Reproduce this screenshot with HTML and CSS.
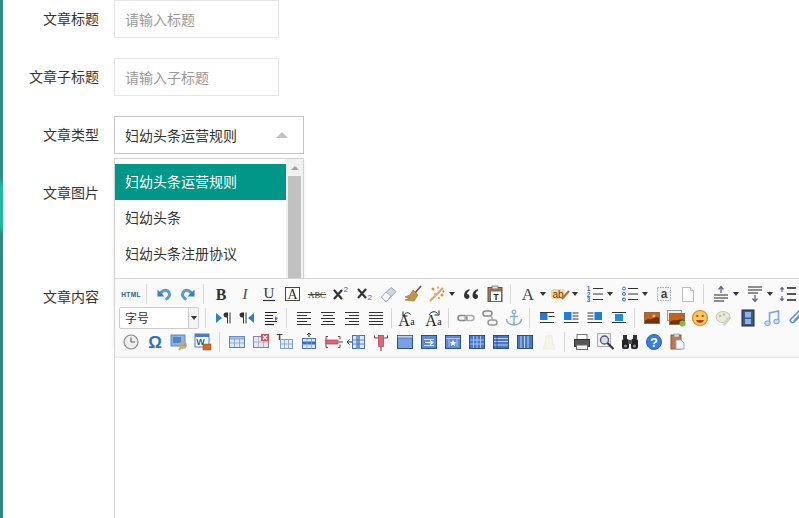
FILE: index.html
```html
<!DOCTYPE html>
<html lang="zh">
<head>
<meta charset="utf-8">
<title>文章编辑</title>
<link rel="stylesheet" href="styles.css">
</head>
<body>
<svg class="sprite" xmlns="http://www.w3.org/2000/svg">
<defs>
<symbol id="undo" viewBox="0 0 20 20"><path d="M6.500 10.500C7 6 13 5 15 8.500c1.500 3-.5 5.500-3.500 7" fill="none" stroke="#5b9bd5" stroke-width="3"/><path d="M3.500 5.500l7 7H3.500z" fill="#3a7cc0"/></symbol>
<symbol id="redo" viewBox="0 0 20 20"><g transform="matrix(-1 0 0 1 20 0)"><path d="M6.500 10.500C7 6 13 5 15 8.500c1.500 3-.5 5.500-3.500 7" fill="none" stroke="#5b9bd5" stroke-width="3"/><path d="M3.500 5.500l7 7H3.500z" fill="#3a7cc0"/></g></symbol>
<symbol id="bold" viewBox="0 0 20 20"><text x="10" y="15.500" class="t-b">B</text></symbol>
<symbol id="italic" viewBox="0 0 20 20"><text x="10" y="15" class="t-i">I</text></symbol>
<symbol id="under" viewBox="0 0 20 20"><text x="10" y="14" class="t-u">U</text><path d="M4 16.500h12" stroke="#333" stroke-width="1.200"/></symbol>
<symbol id="abox" viewBox="0 0 20 20"><rect x="2.500" y="3.500" width="14" height="13" fill="#fff" stroke="#444"/><text x="9.500" y="15" class="t-a">A</text></symbol>
<symbol id="abc" viewBox="0 0 20 20"><text x="10" y="13.500" class="t-abc">ABC</text><path d="M1 10.500h18" stroke="#444"/></symbol>
<symbol id="sup" viewBox="0 0 20 20"><path d="M3 6l8 9M11 6l-8 9" stroke="#333" stroke-width="2.200"/><text x="12.500" y="8" class="t-s">2</text></symbol>
<symbol id="sub" viewBox="0 0 20 20"><path d="M3 5l8 9M11 5l-8 9" stroke="#333" stroke-width="2.200"/><text x="12.500" y="16" class="t-s">2</text></symbol>
<symbol id="eraser" viewBox="0 0 20 20"><path d="M2.500 13L12 3.500l5 4L8 17H6z" fill="#c9d8ec" stroke="#8fa5c2"/><path d="M2.500 13l4.500-5 5 4-4 5H6z" fill="#f6f7fa" stroke="#a4b2c6"/></symbol>
<symbol id="brush" viewBox="0 0 20 20"><path d="M18 2l-6 7" stroke="#7a5a30" stroke-width="1.800"/><path d="M10 6l5 5-4 6-9-1 5-2-5-1 5-2z" fill="#c4944f" stroke="#8a6630" stroke-width=".6"/></symbol>
<symbol id="wand" viewBox="0 0 20 20"><path d="M3 17L16 4" stroke="#e2a264" stroke-width="2.200"/><circle cx="6" cy="5" r="1.500" fill="#d9903f"/><circle cx="15" cy="11" r="1.500" fill="#d9903f"/><circle cx="11" cy="3.500" r="1.200" fill="#e4b27a"/><circle cx="16.500" cy="7.500" r="1" fill="#b67a40"/><circle cx="8" cy="10" r="1.200" fill="#e8b884"/><circle cx="12" cy="14" r="1.100" fill="#d9903f"/></symbol>
<symbol id="quote" viewBox="0 0 20 20"><path d="M8.500 5C5 6 3 8 3 11.500 3 13.500 4.500 15 6 15s2.500-1 2.500-2.500S7.500 10 6 10c.2-1.500 1.200-2.800 2.500-3.500zM17 5c-3.500 1-5.500 3-5.500 6.500 0 2 1.500 3.500 3 3.500s2.500-1 2.500-2.500-1-2.500-2.500-2.500c.2-1.500 1.200-2.800 2.500-3.500z" fill="#333"/></symbol>
<symbol id="paste" viewBox="0 0 20 20"><rect x="3" y="3.500" width="14" height="14" fill="#a87a55" stroke="#6e4a30"/><rect x="7" y="2" width="6" height="3" fill="#ddd" stroke="#666" stroke-width=".7"/><rect x="5.500" y="7" width="11" height="10.500" fill="#fff" stroke="#555" stroke-width=".8"/><text x="11" y="16" class="t-t">T</text></symbol>
<symbol id="forecolor" viewBox="0 0 20 20"><text x="10" y="15.500" class="t-f">A</text></symbol>
<symbol id="hilite" viewBox="0 0 20 20"><rect x="1" y="5" width="14" height="10" fill="#fbd7a0" rx="2"/><text x="8" y="13.500" class="t-ab">ab</text><path d="M12 15l7-8" stroke="#a87a40" stroke-width="2.200"/></symbol>
<symbol id="ol" viewBox="0 0 20 20"><text x="3.500" y="7" class="t-n">1</text><text x="3.500" y="12.500" class="t-n">2</text><text x="3.500" y="18" class="t-n">3</text><path d="M8 4.500h10M8 10h10M8 15.500h10" stroke="#333" stroke-width="1.200"/></symbol>
<symbol id="ul" viewBox="0 0 20 20"><circle cx="4" cy="4.500" r="1.500" fill="none" stroke="#3a6cb8"/><circle cx="4" cy="10" r="1.500" fill="none" stroke="#3a6cb8"/><circle cx="4" cy="15.500" r="1.500" fill="none" stroke="#3a6cb8"/><path d="M8 4.500h10M8 10h10M8 15.500h10" stroke="#333" stroke-width="1.200"/></symbol>
<symbol id="dotbox" viewBox="0 0 20 20"><rect x="3.500" y="3.500" width="13" height="13" fill="#eef2f8" stroke="#9ab" stroke-dasharray="1.500 1"/><text x="10" y="14" class="t-dot">a</text></symbol>
<symbol id="page" viewBox="0 0 20 20"><path d="M4.500 3.500h8l3 3v11h-11z" fill="#fcfcfc" stroke="#bbb"/><path d="M12.500 3.500v3h3" fill="#eee" stroke="#bbb"/></symbol>
<symbol id="pbefore" viewBox="0 0 20 20"><path d="M10 9V3M7.500 5.500L10 2.500l2.500 3" fill="none" stroke="#6a5aa8" stroke-width="1.300"/><path d="M3 11h14M3 14h14M3 17h10" stroke="#222" stroke-width="1.200"/></symbol>
<symbol id="pafter" viewBox="0 0 20 20"><path d="M3 3h14M3 6h14M3 9h10" stroke="#222" stroke-width="1.200"/><path d="M10 11v6M7.500 14.500l2.500 3 2.500-3" fill="none" stroke="#6a5aa8" stroke-width="1.300"/></symbol>
<symbol id="lineh" viewBox="0 0 20 20"><path d="M5 2.500l-2.500 3h5zM5 17.500l-2.500-3h5z" fill="#6a5aa8"/><path d="M5 5v3M5 12v3" stroke="#6a5aa8" stroke-width="1.200"/><path d="M10 4h9M10 10h9M10 16h9" stroke="#222" stroke-width="1.300"/></symbol>
<symbol id="ltr" viewBox="0 0 20 20"><path d="M3 5l6 5-6 5z" fill="#2f7fc8"/><path d="M14.500 4.500v11M17 4.500v11" stroke="#333"/><path d="M14.500 4.500h-1.500a2.500 2.500 0 0 0 0 5h1.500z" fill="#333"/></symbol>
<symbol id="rtl" viewBox="0 0 20 20"><path d="M17 5l-6 5 6 5z" fill="#2f7fc8"/><path d="M6.500 4.500v11M9 4.500v11" stroke="#333"/><path d="M6.500 4.500H5a2.500 2.500 0 0 0 0 5h1.500z" fill="#333"/></symbol>
<symbol id="indent" viewBox="0 0 20 20"><path d="M4 4.500h12M4 7.500h8M4 10.500h8M4 13.500h12" stroke="#222" stroke-width="1.200"/><path d="M14 8l3 2.500-3 2.500z" fill="#2f7fc8"/><path d="M4 16.500h9" stroke="#222" stroke-width="1.200"/></symbol>
<symbol id="left" viewBox="0 0 20 20"><path d="M3 4.500h14M3 7.500h10M3 10.500h14M3 13.500h10M3 16.500h14" stroke="#333" stroke-width="1.100"/></symbol>
<symbol id="center" viewBox="0 0 20 20"><path d="M3 4.500h14M5 7.500h10M3 10.500h14M5 13.500h10M3 16.500h14" stroke="#333" stroke-width="1.100"/></symbol>
<symbol id="right" viewBox="0 0 20 20"><path d="M3 4.500h14M7 7.500h10M3 10.500h14M7 13.500h10M3 16.500h14" stroke="#333" stroke-width="1.100"/></symbol>
<symbol id="just" viewBox="0 0 20 20"><path d="M3 4.500h14M3 7.500h14M3 10.500h14M3 13.500h14M3 16.500h14" stroke="#333" stroke-width="1.100"/></symbol>
<symbol id="aa1" viewBox="0 0 20 20"><text x="7" y="18" class="t-aa">A</text><text x="15.500" y="17" class="t-aa2">a</text><path d="M6.500 8c1-3.500 5-4.500 7-1.500" fill="none" stroke="#222"/><path d="M6 3.500V8h4.500" fill="none" stroke="#222"/></symbol>
<symbol id="aa2" viewBox="0 0 20 20"><text x="7" y="18" class="t-aa">A</text><text x="15.500" y="17" class="t-aa2">a</text><path d="M5 7c2-3.500 6-4.500 8.500-1.500" fill="none" stroke="#222"/><path d="M15 2.500V7h-4.500" fill="none" stroke="#222"/></symbol>
<symbol id="link" viewBox="0 0 20 20"><rect x="2" y="7.500" width="9" height="5" rx="2.500" fill="none" stroke="#888" stroke-width="1.500"/><rect x="9" y="7.500" width="9" height="5" rx="2.500" fill="none" stroke="#aaa" stroke-width="1.500"/></symbol>
<symbol id="unlink" viewBox="0 0 20 20"><rect x="3" y="3" width="9" height="5" rx="2.500" fill="none" stroke="#888" stroke-width="1.500"/><rect x="8" y="12" width="9" height="5" rx="2.500" fill="none" stroke="#999" stroke-width="1.500"/><path d="M11 7l2 6" stroke="#aaa" stroke-width="1.500"/></symbol>
<symbol id="anchor" viewBox="0 0 20 20"><circle cx="10" cy="4" r="1.800" fill="none" stroke="#7fb0d4" stroke-width="1.300"/><path d="M10 6v11M6 8.500h8M2.500 11c0 4 4 6 7.500 6s7.500-2 7.500-6" fill="none" stroke="#7fb0d4" stroke-width="1.500"/></symbol>
<symbol id="imgl" viewBox="0 0 20 20"><rect x="3" y="5" width="7.500" height="7" fill="#1d7fd6"/><path d="M3 4.500h14M11.500 8.500h6M3 14.500h14" stroke="#333" stroke-width="1"/></symbol>
<symbol id="imgn" viewBox="0 0 20 20"><rect x="3" y="4" width="7.500" height="8" fill="#1d7fd6"/><path d="M11.500 5h6M11.500 8h6M11.500 11h6M3 14.500h14.500" stroke="#333" stroke-width="1"/></symbol>
<symbol id="imgr" viewBox="0 0 20 20"><rect x="9.500" y="4" width="7.500" height="8" fill="#1d7fd6"/><path d="M2.500 5h6M2.500 8h6M2.500 11h6M2.500 14.500h14.500" stroke="#333" stroke-width="1"/></symbol>
<symbol id="imgc" viewBox="0 0 20 20"><path d="M3 4.500h14M3 14.500h14" stroke="#333" stroke-width="1.100"/><rect x="6" y="6" width="8" height="7" fill="#1d8fd6"/></symbol>
<symbol id="image" viewBox="0 0 20 20"><rect x="2.500" y="4.500" width="15" height="11" fill="#c5641a" stroke="#8a6a50"/><path d="M3 13c3-3 6-1 8-3s4-1 6 0v5H3z" fill="#6d3410"/><circle cx="12" cy="8" r="1.500" fill="#f6c050"/></symbol>
<symbol id="multi" viewBox="0 0 20 20"><rect x="1.500" y="2.500" width="14" height="10" fill="#eee" stroke="#999"/><rect x="3.500" y="5.500" width="15" height="11" fill="#c5641a" stroke="#8a6a50"/><path d="M4 14c3-3 6-1 8-2s4-1 6 0v4H4z" fill="#6d3410"/><circle cx="16.500" cy="15.500" r="3" fill="#8cb82a"/></symbol>
<symbol id="emoji" viewBox="0 0 20 20"><circle cx="10" cy="10" r="7.500" fill="#f6c760" stroke="#d88a2a" stroke-width="1.200"/><circle cx="7.300" cy="8" r="1.100" fill="#8a4a10"/><circle cx="12.700" cy="8" r="1.100" fill="#8a4a10"/><path d="M6 12h8c-.5 2-2 3-4 3s-3.500-1-4-3z" fill="#a84a20"/></symbol>
<symbol id="scrawl" viewBox="0 0 20 20"><ellipse cx="9" cy="9" rx="7" ry="5.500" fill="#e8e8dc" stroke="#c4c4b4"/><path d="M14 8l3 2-6 8-2-1z" fill="#d4d4bc"/><circle cx="6" cy="8" r="1.200" fill="#b4c0a0"/><circle cx="10" cy="6.500" r="1.200" fill="#c8b890"/></symbol>
<symbol id="video" viewBox="0 0 20 20"><rect x="4" y="2" width="12" height="16" fill="#3d5a84" stroke="#223"/><rect x="7" y="4" width="6" height="5.500" fill="#8fb2e0"/><rect x="7" y="11" width="6" height="5" fill="#8fb2e0"/></symbol>
<symbol id="music" viewBox="0 0 20 20"><path d="M7.500 15V5l9-2v10" fill="none" stroke="#7da4d8" stroke-width="1.600"/><ellipse cx="5.500" cy="15.200" rx="2.800" ry="2.300" fill="#c5d8f0" stroke="#7da4d8"/><ellipse cx="14.500" cy="13.500" rx="2.800" ry="2.300" fill="#c5d8f0" stroke="#7da4d8"/></symbol>
<symbol id="attach" viewBox="0 0 20 20"><path d="M15 7l-7 7c-2 2-5-1-3-3l8-8c1.500-1.500 4 .5 2.500 2l-7.500 8" fill="none" stroke="#5c8fd0" stroke-width="1.600"/></symbol>
<symbol id="clock" viewBox="0 0 20 20"><circle cx="10" cy="10" r="7" fill="#eee" stroke="#888" stroke-width="1.200"/><path d="M10 5.500V10h4" fill="none" stroke="#555"/></symbol>
<symbol id="omega" viewBox="0 0 20 20"><text x="10" y="16" class="t-om">Ω</text></symbol>
<symbol id="wordimg" viewBox="0 0 20 20"><rect x="2" y="3" width="14" height="11" fill="#8ab4e4" stroke="#5a86bc"/><rect x="4" y="5" width="8" height="6" fill="#4a86cc"/><circle cx="14" cy="13" r="3" fill="none" stroke="#d8a050" stroke-width="1.600"/><path d="M12 15l-2 3" stroke="#d8a050" stroke-width="1.800"/></symbol>
<symbol id="word" viewBox="0 0 20 20"><rect x="2" y="2" width="14" height="13" fill="#fff" stroke="#4a7cc0"/><rect x="2" y="2" width="14" height="3" fill="#4a7cc0"/><text x="7.500" y="13" class="t-w">W</text><rect x="10" y="12" width="8" height="6" fill="#d46a20" stroke="#8a4a20" stroke-width=".5"/></symbol>
<symbol id="tbl" viewBox="0 0 20 20"><rect x="2.500" y="4.500" width="15" height="11" fill="#dfe8f6" stroke="#5c7fb8"/><rect x="2.500" y="4.500" width="15" height="2.500" fill="#a9c1e6" stroke="#5c7fb8" stroke-width=".6"/><path d="M7.500 7v8M12.500 7v8M3 11h14" stroke="#7f9fcf" stroke-width=".8"/></symbol>
<symbol id="tbldel" viewBox="0 0 20 20"><rect x="2.500" y="4.500" width="15" height="11" fill="#e4e8f2" stroke="#8a7fa8"/><path d="M7.500 5v10M12.500 5v10M3 10h14" stroke="#a0a8c8" stroke-width=".8"/><rect x="10" y="2" width="8" height="7" fill="#e04a50"/><path d="M12 3.500l4 4M16 3.500l-4 4" stroke="#fff" stroke-width="1.300"/></symbol>
<symbol id="tbltitle" viewBox="0 0 20 20"><text x="4.500" y="8" class="t-tt">T</text><rect x="5.500" y="7.500" width="12" height="9" fill="#e8eef8" stroke="#7f9fcf"/><path d="M9.500 8v8M13.500 8v8M6 12h11" stroke="#7f9fcf" stroke-width=".8"/></symbol>
<symbol id="rowins" viewBox="0 0 20 20"><path d="M10 1v4M8 3l2-2 2 2" fill="none" stroke="#333"/><rect x="3.500" y="6.500" width="13" height="10" fill="#dfe8f6" stroke="#4a70b0"/><rect x="3.500" y="9.500" width="13" height="3" fill="#2f6fd0"/><path d="M8 7v10M12.500 7v10" stroke="#7f9fcf" stroke-width=".8"/></symbol>
<symbol id="rowdel" viewBox="0 0 20 20"><path d="M5 4.500H3v11h2M15 4.500h2v3M15 15.500h2v-3" fill="none" stroke="#8a3a3a"/><rect x="3" y="8" width="12" height="4" fill="#d86a78" stroke="#a84050" stroke-width=".7"/><path d="M15.500 10H20" stroke="#444"/></symbol>
<symbol id="colins" viewBox="0 0 20 20"><path d="M0 10h5M2.500 7.500L0 10l2.500 2.500" fill="none" stroke="#333"/><rect x="5.500" y="3.500" width="12" height="13" fill="#dfe8f6" stroke="#4a70b0"/><rect x="9" y="3.500" width="4" height="13" fill="#6f9be0"/><path d="M6 8h11M6 12h11" stroke="#4a70b0" stroke-width=".8"/></symbol>
<symbol id="coldel" viewBox="0 0 20 20"><path d="M3.500 6V3.500M16.500 6V3.500M3.500 6h13" fill="none" stroke="#8a3a3a"/><rect x="7.500" y="3.500" width="5" height="11" fill="#d86a78" stroke="#a84050" stroke-width=".7"/><path d="M10 15v4" stroke="#444"/></symbol>
<symbol id="merge" viewBox="0 0 20 20"><rect x="2.500" y="3.500" width="15" height="13" fill="#7b9fe0" stroke="#284f90"/><rect x="2.500" y="3.500" width="15" height="2.500" fill="#c0d0ec" stroke="#284f90" stroke-width=".5"/></symbol>
<symbol id="mergeR" viewBox="0 0 20 20"><rect x="2.500" y="3.500" width="15" height="13" fill="#5f8ad4" stroke="#284f90"/><path d="M5 7.500h10M5 13.500h10" stroke="#fff" stroke-width=".8"/><path d="M6 10.500h7M11 8.500l3 2-3 2" fill="none" stroke="#fff" stroke-width="1.100"/></symbol>
<symbol id="mergeD" viewBox="0 0 20 20"><rect x="2.500" y="3.500" width="15" height="13" fill="#5f8ad4" stroke="#284f90"/><path d="M6 6.500v8M14 6.500v8M3 6.500h14" stroke="#c0d0ec" stroke-width=".8"/><path d="M10 7.500l1 2.500 2.500.2-2 1.500.8 2.500-2.300-1.400-2.300 1.400.8-2.500-2-1.500 2.500-.2z" fill="#fff"/></symbol>
<symbol id="split" viewBox="0 0 20 20"><rect x="2.500" y="3.500" width="15" height="13" fill="#4a78d0" stroke="#284f90"/><path d="M6.500 4v12M10 4v12M13.500 4v12M3 8h14M3 12h14" stroke="#c0d0ec" stroke-width=".8"/></symbol>
<symbol id="splitR" viewBox="0 0 20 20"><rect x="2.500" y="3.500" width="15" height="13" fill="#4a78c0" stroke="#284f90"/><path d="M3 6.500h14M3 9.500h14M3 13h14" stroke="#cfdcf0" stroke-width=".9"/><path d="M6 4v12" stroke="#284f90" stroke-width=".8"/></symbol>
<symbol id="splitC" viewBox="0 0 20 20"><rect x="2.500" y="3.500" width="15" height="13" fill="#4a78c0" stroke="#284f90"/><path d="M6 4v12M9.500 4v12M13 4v12" stroke="#cfdcf0" stroke-width=".9"/></symbol>
<symbol id="ghost" viewBox="0 0 20 20"><path d="M7 4h6l1 8 2 5H4l2-5z" fill="#f4f4ea" stroke="#eeeee2"/></symbol>
<symbol id="print" viewBox="0 0 20 20"><rect x="5" y="2.500" width="10" height="6" fill="#fff" stroke="#777"/><rect x="2.500" y="7.500" width="15" height="7" fill="#555" stroke="#333"/><rect x="4.500" y="13" width="11" height="4.500" fill="#f4f4f4" stroke="#666"/></symbol>
<symbol id="preview" viewBox="0 0 20 20"><rect x="1.500" y="1.500" width="13" height="13" fill="#f0f0f0" stroke="#aaa"/><circle cx="8.500" cy="8" r="4" fill="#cde0ee" stroke="#556" stroke-width="1.300"/><path d="M11.500 11l6 6" stroke="#334" stroke-width="2.200"/></symbol>
<symbol id="search" viewBox="0 0 20 20"><rect x="3" y="3" width="4" height="4" fill="#333"/><rect x="13" y="3" width="4" height="4" fill="#333"/><rect x="2" y="7" width="7" height="10" rx="2" fill="#222"/><rect x="11" y="7" width="7" height="10" rx="2" fill="#222"/><rect x="8" y="8" width="4" height="4" fill="#555"/><circle cx="5.500" cy="14" r="1.600" fill="#889"/><circle cx="14.500" cy="14" r="1.600" fill="#889"/></symbol>
<symbol id="help" viewBox="0 0 20 20"><circle cx="10" cy="10" r="7.500" fill="#3a7fdc" stroke="#2a60b0"/><text x="10" y="14.500" class="t-q">?</text></symbol>
<symbol id="tpl" viewBox="0 0 20 20"><rect x="3" y="3" width="10" height="14" fill="#b87a50" stroke="#8a5a38"/><rect x="6" y="2" width="5" height="3" fill="#ddd" stroke="#888" stroke-width=".6"/><path d="M8 8h5l3 3v6H8z" fill="#f4f6fa" stroke="#9ab"/></symbol>
</defs>
</svg>

<div class="page">
  <div class="strip"></div>
  <form class="form">
    <div class="row">
      <label class="label">文章标题</label>
      <input class="input" type="text" placeholder="请输入标题">
    </div>
    <div class="row">
      <label class="label">文章子标题</label>
      <input class="input" type="text" placeholder="请输入子标题">
    </div>
    <div class="row">
      <label class="label">文章类型</label>
      <div class="select-wrap">
        <div class="select">妇幼头条运营规则<span class="caret"></span></div>
        <div class="dropdown">
          <ul class="options">
            <li class="option selected">妇幼头条运营规则</li>
            <li class="option">妇幼头条</li>
            <li class="option">妇幼头条注册协议</li>
          </ul>
          <div class="scroll">
            <div class="scroll-up"><span class="scroll-caret"></span></div>
            <div class="scroll-thumb"></div>
          </div>
        </div>
      </div>
    </div>
    <div class="row row-image">
      <label class="label">文章图片</label>
    </div>
    <div class="row">
      <label class="label">文章内容</label>
      <div class="editor">
        <div class="toolbar">
          <div class="tb-row">
            <span class="b"><svg class="i" viewBox="0 0 20 20"><text x="10" y="12.500" class="t-html">HTML</text></svg></span>
            <span class="sep"></span>
            <span class="b"><svg class="i"><use href="#undo"/></svg></span>
            <span class="b"><svg class="i"><use href="#redo"/></svg></span>
            <span class="sep"></span>
            <span class="b"><svg class="i"><use href="#bold"/></svg></span>
            <span class="b"><svg class="i"><use href="#italic"/></svg></span>
            <span class="b"><svg class="i"><use href="#under"/></svg></span>
            <span class="b"><svg class="i"><use href="#abox"/></svg></span>
            <span class="b"><svg class="i"><use href="#abc"/></svg></span>
            <span class="b"><svg class="i"><use href="#sup"/></svg></span>
            <span class="b"><svg class="i"><use href="#sub"/></svg></span>
            <span class="b"><svg class="i"><use href="#eraser"/></svg></span>
            <span class="b"><svg class="i"><use href="#brush"/></svg></span>
            <span class="b"><svg class="i"><use href="#wand"/></svg></span>
            <span class="arrow a10"></span>
            <span class="b"><svg class="i"><use href="#quote"/></svg></span>
            <span class="b"><svg class="i"><use href="#paste"/></svg></span>
            <span class="sep"></span>
            <span class="b"><svg class="i"><use href="#forecolor"/></svg></span>
            <span class="arrow a8"></span>
            <span class="b"><svg class="i"><use href="#hilite"/></svg></span>
            <span class="arrow"></span>
            <span class="b"><svg class="i"><use href="#ol"/></svg></span>
            <span class="arrow"></span>
            <span class="b"><svg class="i"><use href="#ul"/></svg></span>
            <span class="arrow a10"></span>
            <span class="b"><svg class="i"><use href="#dotbox"/></svg></span>
            <span class="b"><svg class="i"><use href="#page"/></svg></span>
            <span class="sep"></span>
            <span class="b"><svg class="i"><use href="#pbefore"/></svg></span>
            <span class="arrow a10"></span>
            <span class="b"><svg class="i"><use href="#pafter"/></svg></span>
            <span class="arrow a8"></span>
            <span class="b"><svg class="i"><use href="#lineh"/></svg></span>
          </div>
          <div class="tb-row">
            <span class="fontsize"><span class="fs-text">字号</span><span class="fs-drop"></span></span>
            <span class="sep"></span>
            <span class="b"><svg class="i"><use href="#ltr"/></svg></span>
            <span class="b"><svg class="i"><use href="#rtl"/></svg></span>
            <span class="b"><svg class="i"><use href="#indent"/></svg></span>
            <span class="sep"></span>
            <span class="b"><svg class="i"><use href="#left"/></svg></span>
            <span class="b"><svg class="i"><use href="#center"/></svg></span>
            <span class="b"><svg class="i"><use href="#right"/></svg></span>
            <span class="b"><svg class="i"><use href="#just"/></svg></span>
            <span class="sep"></span>
            <span class="b-27"><svg class="i"><use href="#aa1"/></svg></span>
            <span class="b-21"><svg class="i"><use href="#aa2"/></svg></span>
            <span class="sep"></span>
            <span class="b"><svg class="i"><use href="#link"/></svg></span>
            <span class="b"><svg class="i"><use href="#unlink"/></svg></span>
            <span class="b"><svg class="i"><use href="#anchor"/></svg></span>
            <span class="sep"></span>
            <span class="b"><svg class="i"><use href="#imgl"/></svg></span>
            <span class="b"><svg class="i"><use href="#imgn"/></svg></span>
            <span class="b"><svg class="i"><use href="#imgr"/></svg></span>
            <span class="b"><svg class="i"><use href="#imgc"/></svg></span>
            <span class="sep"></span>
            <span class="b"><svg class="i"><use href="#image"/></svg></span>
            <span class="b"><svg class="i"><use href="#multi"/></svg></span>
            <span class="b"><svg class="i"><use href="#emoji"/></svg></span>
            <span class="b"><svg class="i"><use href="#scrawl"/></svg></span>
            <span class="b"><svg class="i"><use href="#video"/></svg></span>
            <span class="b"><svg class="i"><use href="#music"/></svg></span>
            <span class="b"><svg class="i"><use href="#attach"/></svg></span>
          </div>
          <div class="tb-row">
            <span class="b"><svg class="i"><use href="#clock"/></svg></span>
            <span class="b"><svg class="i"><use href="#omega"/></svg></span>
            <span class="b"><svg class="i"><use href="#wordimg"/></svg></span>
            <span class="b"><svg class="i"><use href="#word"/></svg></span>
            <span class="sep sep-wide"></span>
            <span class="b"><svg class="i"><use href="#tbl"/></svg></span>
            <span class="b"><svg class="i"><use href="#tbldel"/></svg></span>
            <span class="b"><svg class="i"><use href="#tbltitle"/></svg></span>
            <span class="b"><svg class="i"><use href="#rowins"/></svg></span>
            <span class="b"><svg class="i"><use href="#rowdel"/></svg></span>
            <span class="b"><svg class="i"><use href="#colins"/></svg></span>
            <span class="b"><svg class="i"><use href="#coldel"/></svg></span>
            <span class="b"><svg class="i"><use href="#merge"/></svg></span>
            <span class="b"><svg class="i"><use href="#mergeR"/></svg></span>
            <span class="b"><svg class="i"><use href="#mergeD"/></svg></span>
            <span class="b"><svg class="i"><use href="#split"/></svg></span>
            <span class="b"><svg class="i"><use href="#splitR"/></svg></span>
            <span class="b"><svg class="i"><use href="#splitC"/></svg></span>
            <span class="b"><svg class="i"><use href="#ghost"/></svg></span>
            <span class="sep"></span>
            <span class="b"><svg class="i"><use href="#print"/></svg></span>
            <span class="b"><svg class="i"><use href="#preview"/></svg></span>
            <span class="b"><svg class="i"><use href="#search"/></svg></span>
            <span class="b"><svg class="i"><use href="#help"/></svg></span>
            <span class="b"><svg class="i"><use href="#tpl"/></svg></span>
          </div>
        </div>
        <div class="edit-area"></div>
      </div>
    </div>
  </form>
</div>
</body>
</html>
```
FILE: styles.css
```css
* { box-sizing: border-box; }
html, body { margin: 0; height: 100%; overflow: hidden; background: #fff; }
body { font-family: "Noto Sans CJK SC", "Liberation Sans", sans-serif; font-size: 14px; color: #333; }
.sprite { display: block; width: 0; height: 0; overflow: hidden; }
.page { display: flex; height: 518px; overflow: hidden; }
.strip { flex: none; width: 3px; background: linear-gradient(#2f8f86 0, #2f8f86 178px, #1fb8a0 186px, #1fb8a0 226px, #2f8a82 234px, #2f8a82 100%); }
.form { flex: none; width: 1100px; }
.row { display: flex; margin-bottom: 20px; }
.row-image { height: 84px; }
.label { flex: none; width: 96px; height: 38px; margin-right: 15px; text-align: right; line-height: 36px; color: #333; }
.input { width: 165px; height: 38px; padding: 0 10px; border: 1px solid #e6e6e6; background: #fff; font: inherit; color: #333; outline: none; }
.input::placeholder { color: #999; opacity: 1; }

.select-wrap { position: relative; width: 190px; height: 38px; z-index: 1; }
.select { display: flex; align-items: center; justify-content: space-between; height: 38px; padding: 0 15px 1px 10px; border: 1px solid #c6c6c6; background: #fff; }
.caret { width: 0; height: 0; border-left: 6px solid transparent; border-right: 6px solid transparent; border-bottom: 6px solid #c2c2c2; }
.dropdown { position: absolute; top: 42px; left: 0; display: flex; width: 190px; height: 190px; border: 1px solid #d2d2d2; background: #fff; box-shadow: 0 2px 4px rgba(0,0,0,.08); }
.options { flex: 1; margin: 0; padding: 5px 0; list-style: none; }
.option { height: 36px; padding-left: 10px; line-height: 34px; white-space: nowrap; }
.selected { background: #009688; color: #fff; }
.scroll { flex: none; display: flex; flex-direction: column; align-items: center; width: 17px; background: #f1f1f1; }
.scroll-up { display: flex; flex: none; align-items: center; justify-content: center; height: 17px; }
.scroll-caret { width: 0; height: 0; border-left: 4px solid transparent; border-right: 4px solid transparent; border-bottom: 4px solid #a3a3a3; }
.scroll-thumb { width: 13px; height: 110px; background: #c1c1c1; }

.editor { position: relative; z-index: 2; flex: none; width: 900px; height: 400px; border: 1px solid #d4d4d4; background: #fff; }
.toolbar { height: 79px; padding: 3px 0 0 4px; background: linear-gradient(#fafafa, #fafafa 96%, #e8e8e8); }
.tb-row { display: flex; align-items: center; height: 24px; }
.b { flex: none; display: flex; align-items: center; justify-content: center; width: 24px; height: 24px; }
.b-27, .b-21 { flex: none; display: flex; align-items: center; height: 24px; }
.b-27 { width: 27px; }
.b-21 { width: 21px; }
.i { display: block; flex: none; width: 20px; height: 20px; }
.sep { flex: none; width: 1px; height: 20px; margin: 0 5px 0 3px; background: #d8d8d8; }
.sep-wide { margin: 0 5px 0 4px; }
.arrow { flex: none; position: relative; width: 11px; height: 24px; }
.arrow::after { content: ""; position: absolute; top: 10px; left: 0; border-left: 3.500px solid transparent; border-right: 3.500px solid transparent; border-top: 4px solid #333; }
.a10 { width: 10px; }
.a8 { width: 8px; }
.fontsize { flex: none; display: flex; width: 80px; height: 22px; margin-right: 3px; border: 1px solid #ccc; border-radius: 2px; background: #fff; }
.fs-text { flex: 1; padding-left: 5px; font-size: 12px; line-height: 20px; color: #333; }
.fs-drop { flex: none; position: relative; width: 10px; border-left: 1px solid #ccc; background: #f4f4f4; }
.fs-drop::after { content: ""; position: absolute; top: 8px; left: 1.500px; border-left: 3px solid transparent; border-right: 3px solid transparent; border-top: 4px solid #333; }
.edit-area { height: 320px; background: #fff; }

.t-html { font: bold 6.500px "Liberation Sans", sans-serif; fill: #2a5f8f; text-anchor: middle; letter-spacing: .4px; }
.t-b { font: bold 16px "Liberation Serif", serif; fill: #333; text-anchor: middle; }
.t-i { font: italic 15px "Liberation Serif", serif; fill: #444; text-anchor: middle; }
.t-u { font: 15px "Liberation Serif", serif; fill: #333; text-anchor: middle; }
.t-a { font: 14px "Liberation Serif", serif; fill: #333; text-anchor: middle; }
.t-abc { font: 8.500px "Liberation Serif", serif; fill: #333; text-anchor: middle; }
.t-s { font: 8px "Liberation Sans", sans-serif; fill: #2f6fb0; }
.t-t { font: bold 9px "Liberation Sans", sans-serif; fill: #222; text-anchor: middle; }
.t-f { font: 17px "Liberation Serif", serif; fill: #444; text-anchor: middle; }
.t-ab { font: 10px "Liberation Sans", sans-serif; fill: #5a3a10; text-anchor: middle; }
.t-n { font: bold 6.500px "Liberation Sans", sans-serif; fill: #2f6fc0; text-anchor: middle; }
.t-dot { font: bold 12px "Liberation Sans", sans-serif; fill: #444; text-anchor: middle; }
.t-aa { font: 16px "Liberation Serif", serif; fill: #222; text-anchor: middle; }
.t-aa2 { font: 10px "Liberation Serif", serif; fill: #222; text-anchor: middle; }
.t-om { font: bold 17px "Liberation Sans", sans-serif; fill: #2f6fc0; text-anchor: middle; }
.t-w { font: bold 9px "Liberation Sans", sans-serif; fill: #2a5aa0; text-anchor: middle; }
.t-tt { font: bold 9px "Liberation Sans", sans-serif; fill: #333; text-anchor: middle; }
.t-q { font: bold 13px "Liberation Sans", sans-serif; fill: #fff; text-anchor: middle; }
```
